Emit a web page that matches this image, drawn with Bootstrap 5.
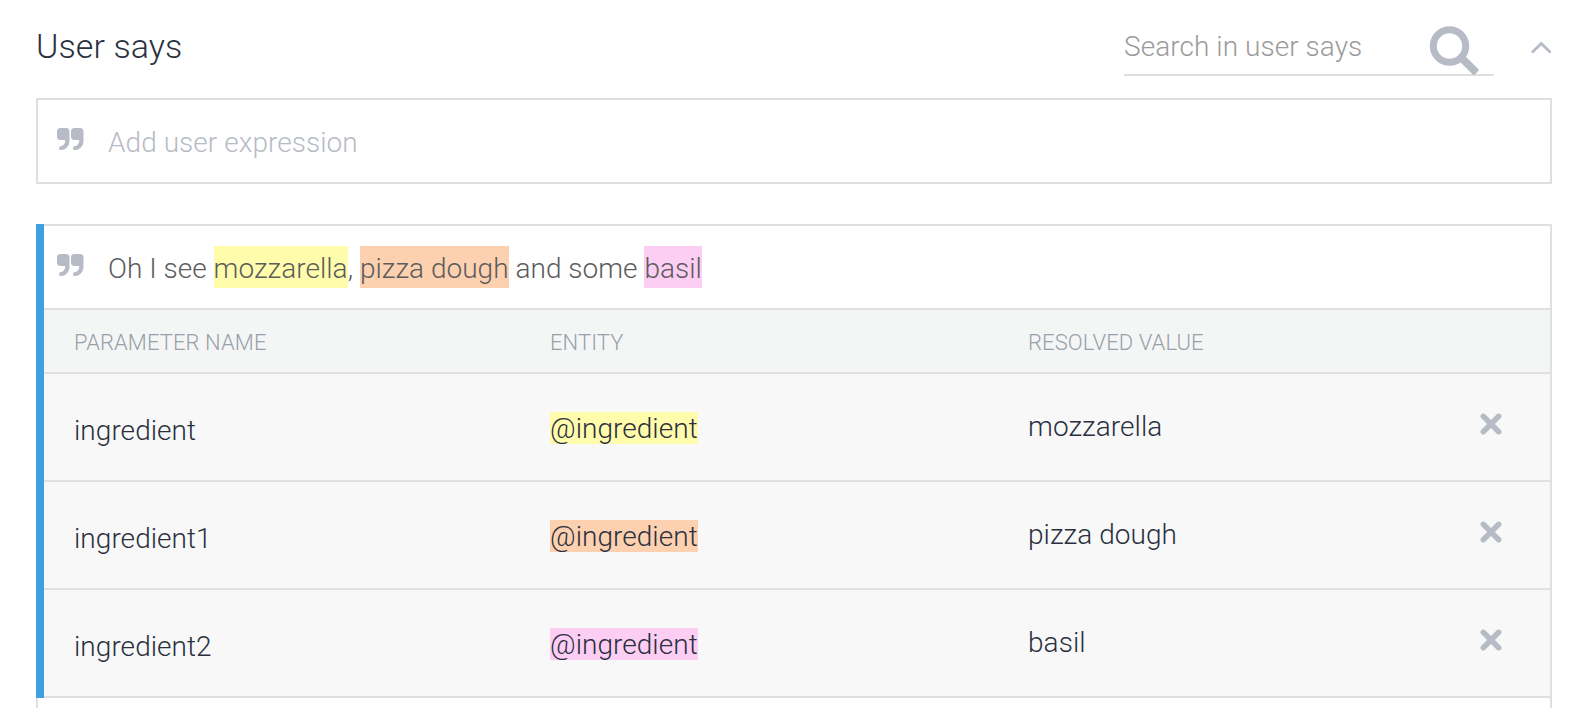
<!DOCTYPE html>
<html lang="en">
<head>
<meta charset="utf-8">
<meta name="viewport" content="width=device-width, initial-scale=1">
<title>User says</title>
<link href="https://cdn.jsdelivr.net/npm/bootstrap@5.3.0/dist/css/bootstrap.min.css" rel="stylesheet">
<style>
  body { font-family: Roboto, "Liberation Sans", sans-serif; font-weight: 300; font-size: 28px; line-height: 33px; letter-spacing: .05px; color: #2b303f; background: #fff; overflow: hidden; height: 708px; }
  .page { padding: 0 22px 0 36px; }
  .topbar { height: 98px; }
  .page-title { font-size: 34px; font-weight: 300; line-height: 42px; padding-top: 25px; letter-spacing: .1px; }
  .search { width: 370px; height: 50px; margin-top: 26px; border-bottom: 2px solid #dfdfdf; color: #9b9b9b; }
  .search-label { padding-top: 4px; letter-spacing: .06px; }
  .search svg { margin-right: 15px; }
  .toggle-icon { margin: 41px 1px 0 37px; }
  .line-box { border: 2px solid #dfdfdf; }
  .expr { height: 82px; padding-left: 19px; }
  .expr svg { margin-top: 28px; }
  .expr-text { margin-left: 24px; padding-top: 26px; color: #5c5c5c; white-space: nowrap; letter-spacing: .02px; }
  .expr-text.hint { color: #b7bbc5; letter-spacing: .05px; }
  .example { margin-top: 40px; border-left: 8px solid #3da0df; }
  .example-body { border: 2px solid #dfe0e0; border-left: 0; }
  .example .expr { padding-left: 13px; }
  .tag-y { background: #fffcab; } .tag-o { background: #fdd1b0; } .tag-p { background: #fdcef4; }
  .expr-text span { padding: 6px 0 3px; }
  .params { display: grid; grid-template-columns: 476px 478px 1fr auto; padding: 0 48px 0 30px; border-top: 2px solid #dfe0e0; }
  .params-head { height: 64px; padding-top: 17px; background: #f3f6f5; color: #9a9faa; font-size: 22px; line-height: 32px; letter-spacing: .08px; }
  .params-row { height: 108px; background: #f8f8f8; }
  .p-name { padding-top: 40px; } .p-entity { padding-top: 38px; } .p-value { padding-top: 36px; }
  .p-entity span { display: inline-block; height: 32px; }
  .params-row svg { margin-top: 39px; }
  .next { height: 40px; border-top: 0; }
</style>
</head>
<body>
<svg class="d-none">
  <symbol id="quote" viewBox="0 0 27 23"><path fill="#b7bbc5" d="M3.500 0H9a3.500 3.500 0 0 1 3.500 3.500V13.500A9 9 0 0 1 4 22H3.200Q2.200 22 2.200 21V19.500Q2.200 18.400 3.200 18.300Q8 17.800 8.300 12H3.500A3.500 3.500 0 0 1 0 8.500V3.500A3.500 3.500 0 0 1 3.500 0ZM17.500 0H23a3.500 3.500 0 0 1 3.500 3.500V13.500A9 9 0 0 1 18 22H17.200Q16.200 22 16.200 21V19.500Q16.200 18.400 17.200 18.300Q22 17.800 22.300 12H17.500A3.500 3.500 0 0 1 14 8.500V3.500A3.500 3.500 0 0 1 17.500 0Z"/></symbol>
  <symbol id="cross" viewBox="0 0 22 22"><path d="M3.300 3.300L18.700 18.700M18.700 3.300L3.300 18.700" fill="none" stroke="#b7bbc5" stroke-width="5.500" stroke-linecap="round"/></symbol>
</svg>
<main class="page">
  <header class="topbar d-flex align-items-start">
    <h1 class="page-title mb-0 me-auto">User says</h1>
    <div class="search d-flex justify-content-between align-items-start">
      <span class="search-label">Search in user says</span>
      <svg width="50" height="49" viewBox="0 0 50 49"><circle cx="20.500" cy="20" r="16.200" fill="none" stroke="#b7bbc5" stroke-width="7"/><rect x="17" y="-3.900" width="23" height="7.800" rx="1.600" transform="translate(19.300 18.500) rotate(45)" fill="#b7bbc5"/></svg>
    </div>
    <svg class="toggle-icon" width="20" height="13" viewBox="0 0 20 13"><path d="M1.800 10.800L10.300 2.500L18.800 10.800" fill="none" stroke="#b7bbc5" stroke-width="2.700" stroke-linecap="round"/></svg>
  </header>
  <div class="line-box expr-box">
    <div class="expr d-flex align-items-start"><svg width="27" height="23"><use href="#quote"/></svg><div class="expr-text hint">Add user expression</div></div>
  </div>
  <section class="example">
    <div class="example-body">
      <div class="expr d-flex align-items-start"><svg width="27" height="23"><use href="#quote"/></svg><div class="expr-text">Oh I see <span class="tag-y">mozzarella</span>, <span class="tag-o">pizza dough</span> and some <span class="tag-p">basil</span></div></div>
      <div class="params params-head"><div>PARAMETER NAME</div><div>ENTITY</div><div>RESOLVED VALUE</div></div>
      <div class="params params-row"><div class="p-name">ingredient</div><div class="p-entity"><span class="tag-y">@ingredient</span></div><div class="p-value">mozzarella</div><svg width="22" height="22"><use href="#cross"/></svg></div>
      <div class="params params-row"><div class="p-name">ingredient1</div><div class="p-entity"><span class="tag-o">@ingredient</span></div><div class="p-value">pizza dough</div><svg width="22" height="22"><use href="#cross"/></svg></div>
      <div class="params params-row"><div class="p-name">ingredient2</div><div class="p-entity"><span class="tag-p">@ingredient</span></div><div class="p-value">basil</div><svg width="22" height="22"><use href="#cross"/></svg></div>
    </div>
  </section>
  <div class="line-box next"></div>
</main>
<script src="https://cdn.jsdelivr.net/npm/bootstrap@5.3.0/dist/js/bootstrap.bundle.min.js"></script>
</body>
</html>
